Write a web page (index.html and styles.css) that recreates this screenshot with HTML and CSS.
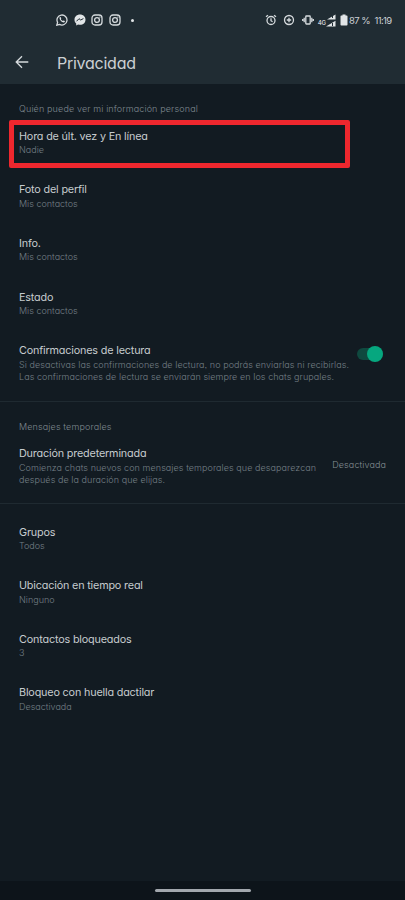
FILE: index.html
```html
<!DOCTYPE html>
<html lang="es">
<head>
<meta charset="utf-8">
<title>Privacidad</title>
<link rel="stylesheet" href="styles.css">
</head>
<body>
<div class="screen">
  <header class="top">
    <div class="status">
      <div class="notifications">
        <svg class="icon" viewBox="0 0 12 12"><path d="M.8 11.2l.8-2.8A5 5 0 1 1 3.6 10.4z"/><path class="solid" d="M3.6 3.2l1-.2.7 1.4-.5.7c.5 1 1.100 1.500 2 1.900l.7-.6 1.400.7-.2 1C7 9.500 3 6.200 3.600 3.200z"/></svg>
        <svg class="icon" viewBox="0 0 12 12"><path class="solid" d="M6 .6C2.800.600.500 2.800.500 5.700c0 1.600.7 2.900 1.700 3.800v2l1.900-1q.9.300 1.900.3c3.200 0 5.500-2.200 5.500-5.100S9.200.600 6 .600z"/><path class="dark" d="M2.500 7.300l2.500-2.600 1.700 1.300 2.700-1.400"/></svg>
        <svg class="icon" viewBox="0 0 12 12"><rect x="1" y="1" width="10" height="10" rx="3"/><circle cx="6" cy="6" r="2.400"/><circle class="solid" cx="8.900" cy="3.100" r=".6"/></svg>
        <svg class="icon" viewBox="0 0 12 12"><rect x="1" y="1" width="10" height="10" rx="3"/><circle cx="6" cy="6" r="2.400"/><circle class="solid" cx="8.900" cy="3.100" r=".6"/></svg>
        <i class="dot"></i>
      </div>
      <div class="system">
        <svg class="icon" viewBox="0 0 12 12"><circle cx="6" cy="6.500" r="4"/><path d="M1 2.800L3 1.200M11 2.800L9 1.200M6 4.200v2.500l1.600 1"/></svg>
        <svg class="icon saver" viewBox="0 0 12 12"><circle cx="6" cy="6" r="4.500"/><path d="M6 3.800v4.400M3.800 6h4.400"/></svg>
        <svg class="icon vibrate" viewBox="0 0 12 12"><rect x="3.800" y="2" width="4.400" height="8" rx=".5"/><path d="M2.200 3.800v4.400M9.800 3.800v4.400M.7 5v2M11.300 5v2"/></svg>
        <span class="network">4G</span>
        <svg class="signal" viewBox="0 0 10 13"><path class="solid" d="M9.500.5v5H1zM9.500 6.800v5.700H0z"/><path class="dark" d="M6.500 1v3M6.500 9v3"/></svg>
        <svg class="battery" viewBox="0 0 8 12"><path class="solid" d="M2.500.5h3v1h1.200q.8 0 .8.800v8.400q0 .8-.8.800H1.300q-.8 0-.8-.8V2.300q0-.8.800-.8h1.200z"/></svg>
        <span class="percent">87 %</span>
        <span class="clock">11:19</span>
      </div>
    </div>
    <div class="bar">
      <svg class="back" viewBox="0 0 14 14"><path d="M13.300 7H1.200M7 1.200L1.200 7 7 12.800"/></svg>
      <h1>Privacidad</h1>
    </div>
  </header>
  <main>
    <section class="personal">
      <h2>Quién puede ver mi información personal</h2>
      <div class="row marked"><h3>Hora de últ. vez y En línea</h3><p>Nadie</p></div>
      <div class="row"><h3>Foto del perfil</h3><p>Mis contactos</p></div>
      <div class="row"><h3>Info.</h3><p>Mis contactos</p></div>
      <div class="row"><h3>Estado</h3><p>Mis contactos</p></div>
      <div class="row split">
        <div><h3>Confirmaciones de lectura</h3><p class="long">Si desactivas las confirmaciones de lectura, no podrás enviarlas ni recibirlas.<br>Las confirmaciones de lectura se enviarán siempre en los chats grupales.</p></div>
        <span class="switch"><i></i></span>
      </div>
    </section>
    <section class="temporary">
      <h2>Mensajes temporales</h2>
      <div class="row split">
        <div><h3>Duración predeterminada</h3><p class="long">Comienza chats nuevos con mensajes temporales que desaparezcan<br>después de la duración que elijas.</p></div>
        <span class="value">Desactivada</span>
      </div>
    </section>
    <section class="others">
      <div class="row"><h3>Grupos</h3><p>Todos</p></div>
      <div class="row"><h3>Ubicación en tiempo real</h3><p>Ninguno</p></div>
      <div class="row"><h3>Contactos bloqueados</h3><p>3</p></div>
      <div class="row"><h3>Bloqueo con huella dactilar</h3><p>Desactivada</p></div>
    </section>
  </main>
  <footer><i></i></footer>
</div>
</body>
</html>
```
FILE: styles.css
```css
*, *::after { box-sizing: border-box; }
body { margin: 0; background: #121b22; }
h1, h2, h3, p { margin: 0; white-space: nowrap; }
.screen { width: 405px; height: 900px; display: flex; flex-direction: column; overflow: hidden; background: #121b22; color: #cbd0d3; font-family: Inter, "Open Sans", sans-serif; font-feature-settings: "cv11", "ss03"; }
.top { height: 84px; background: #202c33; }
.status { height: 40px; display: flex; justify-content: space-between; padding: 0 13.500px 0 56px; }
.notifications, .system { display: flex; align-items: center; }
.notifications { gap: 5.600px; }
svg { fill: none; stroke: #d5dadd; stroke-width: 1.300; flex: none; display: block; }
.solid { fill: #e1e5e7; stroke: none; }
.dark { stroke: #202c33; stroke-width: 1; }
.icon { width: 12px; height: 12px; }
.dot { width: 3px; height: 3px; margin-left: 5px; border-radius: 50%; background: #e1e5e7; }
.saver { margin-left: 6px; }
.vibrate { margin-left: 6.500px; }
.network { margin: 5px 0 0 4px; font-size: 6px; font-weight: 600; letter-spacing: -.1px; }
.signal { width: 10px; height: 13px; }
.battery { width: 8px; height: 12px; margin-left: 4px; }
.percent, .clock { font-size: 9.500px; white-space: nowrap; font-weight: 400; }
.percent { margin-left: 1px; letter-spacing: -.55px; }
.clock { margin-left: 4.500px; letter-spacing: -.65px; }
.bar { height: 44px; display: flex; align-items: center; padding: 0 0 0 15px; }
.back { width: 14px; height: 14px; margin-top: -1px; }
h1 { margin: 2px 0 0 28px; font-size: 16px; line-height: 22px; font-weight: 400; letter-spacing: -.25px; }
main { flex: 1; }
section { padding: 0 19px; }
h2 { font-size: 9px; line-height: 12px; font-weight: 300; color: #7f8990; letter-spacing: .13px; }
h3 { font-size: 10.800px; line-height: 15px; font-weight: 400; color: #c6cbce; letter-spacing: -.17px; }
p, .value { font-size: 9px; line-height: 12px; font-weight: 300; color: #747f86; }
p { padding-top: .4px; }
.long { letter-spacing: .07px; }
.row { position: relative; height: 53.650px; }
.personal { height: 318px; padding-top: 19px; border-bottom: 1px solid #1f2a31; }
.personal h2 { margin-bottom: 13.700px; }
.marked::after { content: ""; position: absolute; left: -10.500px; top: -9px; width: 341px; height: 48px; border: 5px solid #ee272e; border-radius: 2px; }
.split { display: flex; justify-content: space-between; }
.switch { display: flex; justify-content: flex-end; width: 26px; height: 12px; margin: 5px 3px 0 0; border-radius: 6px; background: #0f493f; }
.switch i { width: 16px; height: 16px; margin-top: -2px; border-radius: 50%; background: #06a77f; }
.temporary { height: 102px; padding-top: 19px; border-bottom: 1px solid #1f2a31; }
.temporary h2 { margin-bottom: 13.200px; }
.value { margin-top: 13px; color: #848e94; letter-spacing: .1px; }
.others { padding-top: 20.500px; }
footer { height: 19px; display: flex; justify-content: center; align-items: center; background: #0d141a; }
footer i { width: 96px; height: 3px; border-radius: 2px; background: #a2a7ad; }
```
